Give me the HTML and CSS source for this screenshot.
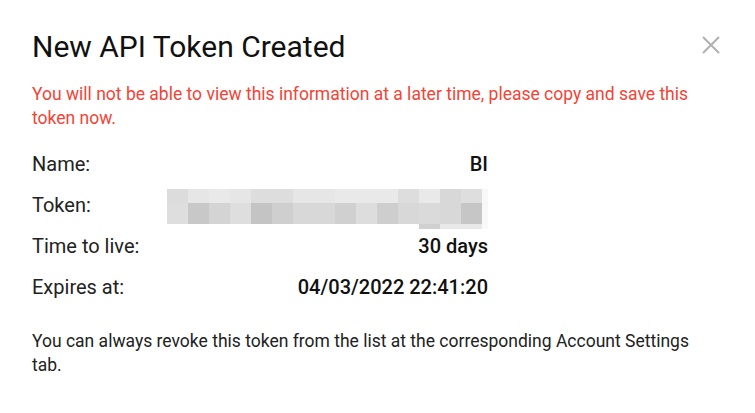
FILE: index.html
```html
<!DOCTYPE html>
<html>
<head>
<meta charset="utf-8">
<link rel="stylesheet" href="styles.css">
</head>
<body>
<div class="dialog">
  <div class="header">
    <h1 class="title">New API Token Created</h1>
    <button class="close" aria-label="Close">
      <svg width="18" height="18" viewBox="0 0 18 18"><path d="M1 1L17 17M17 1L1 17" stroke="#b0b0b0" stroke-width="2" fill="none"/></svg>
    </button>
  </div>
  <p class="warning">You will not be able to view this information at a later time, please copy and save this token now.</p>
  <div class="details">
    <div class="row"><span class="label">Name:</span><span class="value">BI</span></div>
    <div class="row"><span class="label">Token:</span>
      <span class="token">
        <span class="trow r1">
          <i style="background:#dcdcdc"></i><i style="background:#e6e6e6"></i><i style="background:#e9e9e9"></i><i style="background:#e6e6e6"></i><i style="background:#dddddd"></i><i style="background:#dddddd"></i><i style="background:#e6e6e6"></i><i style="background:#e6e6e6"></i><i style="background:#e9e9e9"></i><i style="background:#e9e9e9"></i><i style="background:#e9e9e9"></i><i style="background:#dddddd"></i><i style="background:#e9e9e9"></i><i style="background:#d8d8d8"></i><i style="background:#dedede"></i><i class="edge"></i>
        </span>
        <span class="trow r2">
          <i style="background:#dedede"></i><i style="background:#c8c8c8"></i><i style="background:#d4d4d4"></i><i style="background:#dedede"></i><i style="background:#c4c4c4"></i><i style="background:#cfcfcf"></i><i style="background:#d8d8d8"></i><i style="background:#d8d8d8"></i><i style="background:#d0d0d0"></i><i style="background:#dddddd"></i><i style="background:#cecece"></i><i style="background:#d8d8d8"></i><i style="background:#dadada"></i><i style="background:#d8d8d8"></i><i style="background:#c6c6c6"></i><i class="edge"></i>
        </span>
        <span class="trow r3">
          <i></i><i></i><i></i><i></i><i></i><i></i><i></i><i></i><i></i><i></i><i></i><i></i><i style="background:#d0d0d0"></i><i style="background:#e8e8e8"></i><i style="background:#e8e8e8"></i><i class="edge"></i>
        </span>
      </span>
    </div>
    <div class="row"><span class="label">Time to live:</span><span class="value">30 days</span></div>
    <div class="row"><span class="label">Expires at:</span><span class="value">04/03/2022 22:41:20</span></div>
  </div>
  <p class="note">You can always revoke this token from the list at the corresponding Account Settings tab.</p>
</div>
</body>
</html>
```

FILE: styles.css
```css
html, body {
  margin: 0;
  padding: 0;
  background: #fff;
}
body {
  font-family: Roboto, "Noto Sans", sans-serif;
  color: #212121;
}
.dialog {
  width: 755px;
  box-sizing: border-box;
  padding: 29px 32px 0 32px;
}
.header {
  display: flex;
  justify-content: space-between;
  align-items: flex-start;
}
.title {
  margin: 0;
  font-size: 30px;
  font-weight: 400;
  line-height: 36px;
  color: #111;
}
.close {
  border: 0;
  background: none;
  padding: 0;
  margin: 7px 3px 0 0;
  width: 18px;
  height: 18px;
  cursor: pointer;
}
.close svg { display: block; }
.warning {
  margin: 17px 0 0 0;
  max-width: 680px;
  font-size: 17.5px;
  line-height: 24px;
  color: #f44336;
}
.details {
  width: 456px;
  margin-top: 22px;
  display: flex;
  flex-direction: column;
  gap: 17px;
}
.row {
  display: flex;
  justify-content: space-between;
  align-items: center;
  font-size: 20px;
  line-height: 24px;
  height: 24px;
}
.label { color: #222; }
.value { font-weight: 500; color: #111; }
.token {
  display: flex;
  flex-direction: column;
  margin-top: 8px;
}
.trow { display: flex; }
.trow i { display: block; width: 21px; }
.trow i.edge { width: 6px; background: #f8f8f8; }
.r1 i { height: 14px; }
.r2 i { height: 21px; }
.r3 i { height: 5px; }
.r3 i.edge { background: #fafafa; }
.note {
  margin: 30px 0 0 0;
  max-width: 680px;
  font-size: 17.5px;
  line-height: 24px;
  color: #222;
}
```
